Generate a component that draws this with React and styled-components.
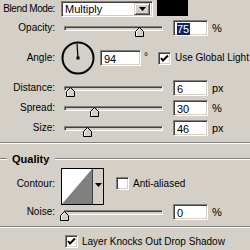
import React from "react";
import styled, { createGlobalStyle } from "styled-components";

const Global = createGlobalStyle`
  html, body { margin: 0; padding: 0; background: #d4d0c8; }
  body { font-family: "Liberation Sans", Arial, sans-serif; font-size: 10px; color: #000; }
`;

const Panel = styled.div`
  width: 250px;
  height: 250px;
  overflow: hidden;
  background: #d4d0c8;
  display: flex;
  flex-direction: column;
`;

const Row = styled.div`
  display: flex;
  align-items: ${(p) => p.$align || "center"};
  height: ${(p) => p.$h}px;
  margin-top: ${(p) => p.$mt || 0}px;
  flex: none;
`;

const Label = styled.div`
  width: 55px;
  flex: none;
  text-align: right;
  white-space: nowrap;
  line-height: 12px;
  letter-spacing: ${(p) => (p.$tight ? "-0.4px" : "0")};
  margin-right: ${(p) => p.$mr ?? 6}px;
  margin-top: ${(p) => p.$mt || 0}px;
`;

const sunken = `
  box-sizing: border-box;
  border: 1px solid;
  border-color: #808080 #ffffff #ffffff #808080;
  box-shadow: inset 1px 1px #404040, inset -1px -1px #d4d0c8;
`;

const Select = styled.div`
  ${sunken}
  width: 92px;
  height: 16px;
  background: #fff;
  display: flex;
  align-items: center;
  justify-content: space-between;
  padding: 2px 2px 2px 3px;
  font-size: 11px;
`;

const DropButton = styled.div`
  box-sizing: border-box;
  width: 16px;
  height: 12px;
  background: #d4d0c8;
  border: 1px solid;
  border-color: #d4d0c8 #404040 #404040 #d4d0c8;
  box-shadow: inset 1px 1px #fff, inset -1px -1px #808080;
  display: flex;
  align-items: center;
  justify-content: center;
`;

const Swatch = styled.div`
  width: 31px;
  height: 16px;
  background: #000;
  margin-left: 4px;
  align-self: flex-start;
`;

const SliderBox = styled.div`
  width: 105px;
  flex: none;
  display: flex;
  align-items: center;
  padding-left: 3px;
  box-sizing: border-box;
`;

const Track = styled.div`
  position: relative;
  width: 99px;
  height: 5px;
  box-sizing: border-box;
  border: 1px solid;
  border-color: #808080 #ffffff #ffffff #808080;
  box-shadow: inset 1px 1px #404040;
  background: #d4d0c8;
`;

const Thumb = styled.svg`
  position: absolute;
  top: 0px;
  width: 9px;
  height: 10px;
  overflow: visible;
`;

const Field = styled.div`
  ${sunken}
  width: ${(p) => p.$w || 35}px;
  height: 16px;
  background: #fff;
  margin-left: ${(p) => p.$ml ?? 7}px;
  padding: 2px 2px 2px 3px;
  font-size: 11px;
  line-height: 12px;
  white-space: nowrap;
  flex: none;
`;

const Selected = styled.span`
  background: #0a246a;
  color: #fff;
  padding: 0 1px 0 0;
`;

const Unit = styled.div`
  margin-left: 4px;
  font-size: 11px;
  line-height: 12px;
`;

const Degree = styled.div`
  align-self: flex-start;
  margin-top: 13px;
  margin-left: 3px;
  font-size: 10px;
`;

const Box = styled.div`
  ${sunken}
  width: 13px;
  height: 13px;
  background: #fff;
  flex: none;
  display: flex;
  align-items: center;
  justify-content: center;
  margin-left: ${(p) => p.$ml || 0}px;
  margin-top: ${(p) => p.$mt || 0}px;
`;

const BoxText = styled.div`
  margin-left: 4px;
  white-space: nowrap;
  line-height: 12px;
  margin-top: ${(p) => p.$mt || 0}px;
`;

const CheckGroup = styled.div`
  display: flex;
  align-items: center;
  margin-left: ${(p) => p.$ml || 0}px;
  margin-top: ${(p) => p.$mt || 0}px;
`;

const Separator = styled.div`
  height: 1px;
  background: #808080;
  border-bottom: 1px solid #fff;
  margin-top: ${(p) => p.$mt || 0}px;
  flex: none;
`;

const GroupHead = styled.div`
  display: flex;
  align-items: center;
  height: 18px;
  margin-top: 6px;
  flex: none;
`;

const GroupLine = styled.div`
  height: 1px;
  background: #808080;
  border-bottom: 1px solid #fff;
  width: ${(p) => (p.$grow ? "auto" : "7px")};
  flex: ${(p) => (p.$grow ? 1 : "none")};
`;

const GroupTitle = styled.div`
  font-weight: bold;
  font-size: 11px;
  padding: 0 6px 0 5px;
  line-height: 12px;
`;

const Contour = styled.div`
  box-sizing: border-box;
  width: 43px;
  height: 37px;
  border: 1px solid #000;
  display: flex;
  flex: none;
  background: #d4d0c8;
`;

const ContourPreview = styled.svg`
  width: 30px;
  height: 35px;
  display: block;
  border-right: 1px solid #404040;
`;

const ContourDrop = styled.div`
  flex: 1;
  display: flex;
  justify-content: center;
  padding-top: 14px;
`;

const Arrow = () => (
  <svg width="7" height="4" viewBox="0 0 7 4">
    <polygon points="0,0 7,0 3.5,4" fill="#000" />
  </svg>
);

const Check = () => (
  <svg width="9" height="9" viewBox="0 0 9 9">
    <polyline points="1,4 3,6.5 8,1.5" fill="none" stroke="#000" strokeWidth="2" />
  </svg>
);

const Slider = ({ pos }) => (
  <SliderBox>
    <Track>
      <Thumb style={{ left: pos - 5 }} viewBox="0 0 9 10">
        <polygon points="4.5,0.5 8.5,4.5 8.5,9.5 0.5,9.5 0.5,4.5" fill="#d4d0c8" stroke="#000" strokeWidth="1" />
        <polyline points="1.5,9 1.5,5 4.5,2" fill="none" stroke="#fff" strokeWidth="1" />
      </Thumb>
    </Track>
  </SliderBox>
);

const SliderRow = ({ label, pos, value, unit, selected, h = 20, mt = 0 }) => (
  <Row $h={h} $mt={mt}>
    <Label $mr={6}>{label}</Label>
    <Slider pos={pos} />
    <Field>{selected ? <Selected>{value}</Selected> : value}</Field>
    <Unit>{unit}</Unit>
  </Row>
);

const Dial = ({ angle }) => {
  const r = Math.PI * angle / 180;
  const x2 = 17 + Math.cos(r) * 14;
  const y2 = 17 - Math.sin(r) * 14;
  return (
    <svg width="35" height="35" viewBox="0 0 35 35">
      <circle cx="17" cy="17" r="15.5" fill="none" stroke="#000" strokeWidth="2" />
      <line x1="17" y1="17" x2={x2} y2={y2} stroke="#000" strokeWidth="1.2" />
      <rect x="15.5" y="15.5" width="3" height="3" fill="#000" />
    </svg>
  );
};

export default function App() {
  return (
    <>
      <Global />
      <Panel>
        <Row $h={18}>
          <Label $tight $mr={6}>Blend Mode:</Label>
          <Select>
            <span>Multiply</span>
            <DropButton><Arrow /></DropButton>
          </Select>
          <Swatch />
        </Row>
        <SliderRow label="Opacity:" pos={75} value="75" unit="%" selected />
        <Row $h={40}>
          <Label $mr={6}>Angle:</Label>
          <Dial angle={94} />
          <Field $w={41} $ml={4}>94</Field>
          <Degree>°</Degree>
          <CheckGroup $ml={10}>
            <Box><Check /></Box>
            <BoxText>Use Global Light</BoxText>
          </CheckGroup>
        </Row>
        <SliderRow label="Distance:" pos={6} value="6" unit="px" />
        <SliderRow label="Spread:" pos={30} value="30" unit="%" />
        <SliderRow label="Size:" pos={23} value="46" unit="px" />
        <Separator $mt={4} />
        <GroupHead>
          <GroupLine />
          <GroupTitle>Quality</GroupTitle>
          <GroupLine $grow />
        </GroupHead>
        <Row $h={37} $align="flex-start">
          <Label $mr={6} $mt={10}>Contour:</Label>
          <Contour>
            <ContourPreview viewBox="0 0 30 35" preserveAspectRatio="none">
              <rect width="30" height="35" fill="#fff" />
              <polygon points="0,35 30,0 30,35" fill="#808080" />
            </ContourPreview>
            <ContourDrop><Arrow /></ContourDrop>
          </Contour>
          <CheckGroup $ml={12} $mt={9}>
            <Box />
            <BoxText>Anti-aliased</BoxText>
          </CheckGroup>
        </Row>
        <SliderRow label="Noise:" pos={0} value="0" unit="%" h={14} />
        <Separator $mt={7} />
        <Row $h={13} $mt={7}>
          <Box $ml={65}><Check /></Box>
          <BoxText>Layer Knocks Out Drop Shadow</BoxText>
        </Row>
      </Panel>
    </>
  );
}
